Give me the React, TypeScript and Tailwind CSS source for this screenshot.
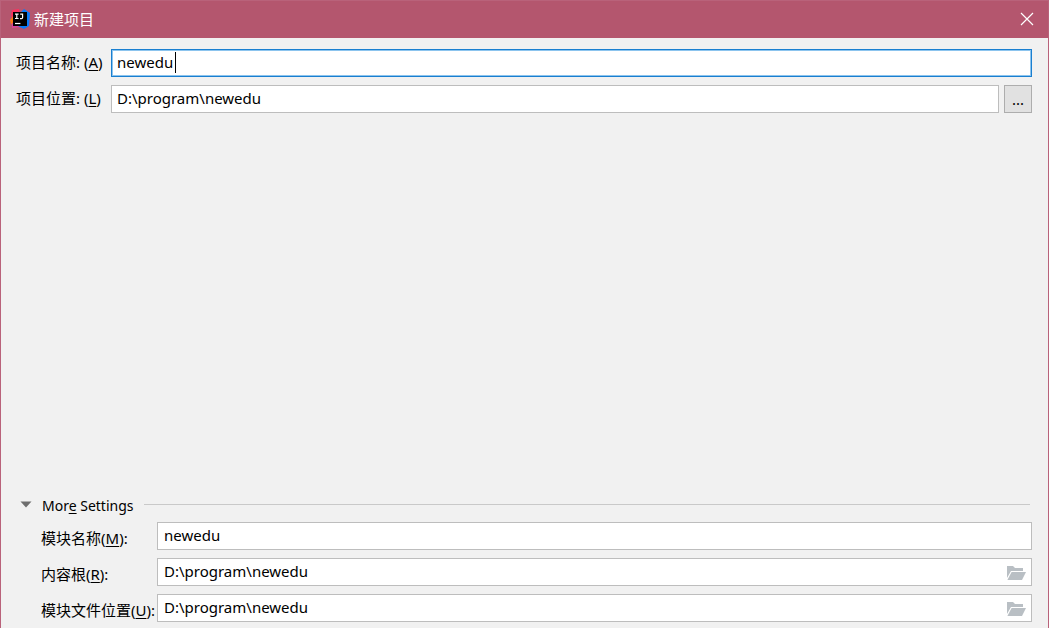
import React, { useState } from 'react';

const IdeaLogo: React.FC = () => (
  <svg width="20" height="20" viewBox="0 0 20 20" aria-hidden="true">
    <path d="M2 1 L9 0 L11 10 L3 13 L1 6 Z" fill="#fe315d" />
    <path d="M0 11 L4 6 L10 16 L7 17 L1 15 Z" fill="#f97a12" />
    <path d="M2 14 L12 13 L11 18 L2 19 Z" fill="#d9459a" />
    <path d="M11 3 L14 0 L20 4 L19 17 L14 20 L8 17 Z" fill="#087cfa" />
    <rect x="3" y="3" width="14" height="14" fill="#000" />
    <g fill="none" stroke="#fff" strokeWidth="1.2">
      <path d="M5 5.1 H8.6 M6.8 5 V9.6 M5 9.5 H8.6" />
      <path d="M10.2 5.1 H13.2 M12.6 5 V8.4 Q12.6 9.6 11.4 9.6 H10" />
      <path d="M5 14.5 H10.4" />
    </g>
  </svg>
);

const FolderIcon: React.FC = () => (
  <svg width="20" height="16" viewBox="0 0 20 16" aria-hidden="true">
    <path d="M1 1 H7 L9 3 H17 V6 H5 L1 13 Z" fill="#b9bfc4" />
    <path d="M5.6 7 H20 L16 15 H1.4 Z" fill="#b9bfc4" />
  </svg>
);

const inputClass =
  'block h-7 w-full min-w-0 border border-[#bdbdbd] bg-white pb-[2px] text-[15px] text-black outline-none';

interface FieldProps {
  id: string;
  label: React.ReactNode;
  value: string;
  onChange: (value: string) => void;
  browse?: boolean;
}

const ModuleField: React.FC<FieldProps> = ({ id, label, value, onChange, browse }) => (
  <div className="flex items-center">
    <label htmlFor={id} className="w-[116px] shrink-0 whitespace-nowrap pt-1">
      {label}
    </label>
    <div className="relative flex-1">
      <input
        id={id}
        className={`${inputClass} px-[6px]`}
        value={value}
        onChange={(e) => onChange(e.target.value)}
      />
      {browse && (
        <button type="button" aria-label="浏览" className="absolute right-[6px] top-[7px]">
          <FolderIcon />
        </button>
      )}
    </div>
  </div>
);

const Key: React.FC<{ children: string }> = ({ children }) => (
  <span className="underline decoration-1 underline-offset-2">{children}</span>
);

const App: React.FC = () => {
  const [name, setName] = useState('newedu');
  const [location, setLocation] = useState('D:\\program\\newedu');
  const [moduleName, setModuleName] = useState('newedu');
  const [contentRoot, setContentRoot] = useState('D:\\program\\newedu');
  const [moduleFile, setModuleFile] = useState('D:\\program\\newedu');
  const [open, setOpen] = useState(true);

  return (
    <div className="flex min-h-screen flex-col border-x border-t border-[#b9627a] bg-[#f1f1f1] font-['Noto_Sans','Noto_Sans_CJK_SC',sans-serif] text-[15px] leading-5 text-black">
      <header className="flex h-[37px] items-center bg-[#b4566e] pb-[2px] pl-[9px] pr-[14px]">
        <IdeaLogo />
        <h1 className="ml-1 flex-1 text-white">新建项目</h1>
        <button type="button" aria-label="关闭">
          <svg width="14" height="14" viewBox="0 0 14 14" stroke="#fff" strokeWidth="1.2" aria-hidden="true">
            <path d="M1 1 L13 13 M13 1 L1 13" />
          </svg>
        </button>
      </header>

      <form className="flex flex-1 flex-col pb-[6px] pl-[15px] pr-4 pt-[11px]">
        <div className="flex flex-col gap-2">
          <div className="flex items-center">
            <label htmlFor="name" className="w-[95px] shrink-0 whitespace-nowrap pb-[2px]">
              项目名称: (<Key>A</Key>)
            </label>
            <div className="relative flex-1">
              <input
                id="name"
                className="block h-7 w-full min-w-0 border border-[#1a7fd0] bg-white px-[5px] pb-[2px] text-[15px] text-black caret-transparent outline-none ring-1 ring-inset ring-[#8cc4ee]"
                value={name}
                onChange={(e) => setName(e.target.value)}
              />
              <span className="absolute left-16 top-[3px] h-[21px] w-px bg-black" />
            </div>
          </div>
          <div className="flex items-center">
            <label htmlFor="location" className="w-[95px] shrink-0 whitespace-nowrap pb-[2px]">
              项目位置: (<Key>L</Key>)
            </label>
            <div className="flex flex-1 gap-[5px]">
              <input
                id="location"
                className={`${inputClass} px-[5px]`}
                value={location}
                onChange={(e) => setLocation(e.target.value)}
              />
              <button
                type="button"
                className="h-7 w-7 shrink-0 border border-[#adadad] bg-[#e1e1e1]"
              >
                ...
              </button>
            </div>
          </div>
        </div>

        <section className="mt-auto">
          <div className="flex items-center pl-1 pr-[2px]">
            <button
              type="button"
              aria-expanded={open}
              onClick={() => setOpen(!open)}
              className="flex items-center text-[14px]"
            >
              <svg width="12" height="8" viewBox="0 0 12 8" className="mb-[2px]" aria-hidden="true">
                <path d="M0.5 0.5 H11.5 L6 6.5 Z" fill="#6e6e6e" />
              </svg>
              <span className="ml-[10px]">
                Mor<Key>e</Key> Settings
              </span>
            </button>
            <div className="mb-1 ml-[10px] h-px flex-1 bg-[#c9c9c9]" />
          </div>
          {open && (
            <div className="flex flex-col gap-2 pl-[25px] pt-[6px]">
              <ModuleField
                id="module-name"
                label={<>模块名称(<Key>M</Key>):</>}
                value={moduleName}
                onChange={setModuleName}
              />
              <ModuleField
                id="content-root"
                label={<>内容根(<Key>R</Key>):</>}
                value={contentRoot}
                onChange={setContentRoot}
                browse
              />
              <ModuleField
                id="module-file"
                label={<>模块文件位置(<Key>U</Key>):</>}
                value={moduleFile}
                onChange={setModuleFile}
                browse
              />
            </div>
          )}
        </section>
      </form>
    </div>
  );
};

export default App;
